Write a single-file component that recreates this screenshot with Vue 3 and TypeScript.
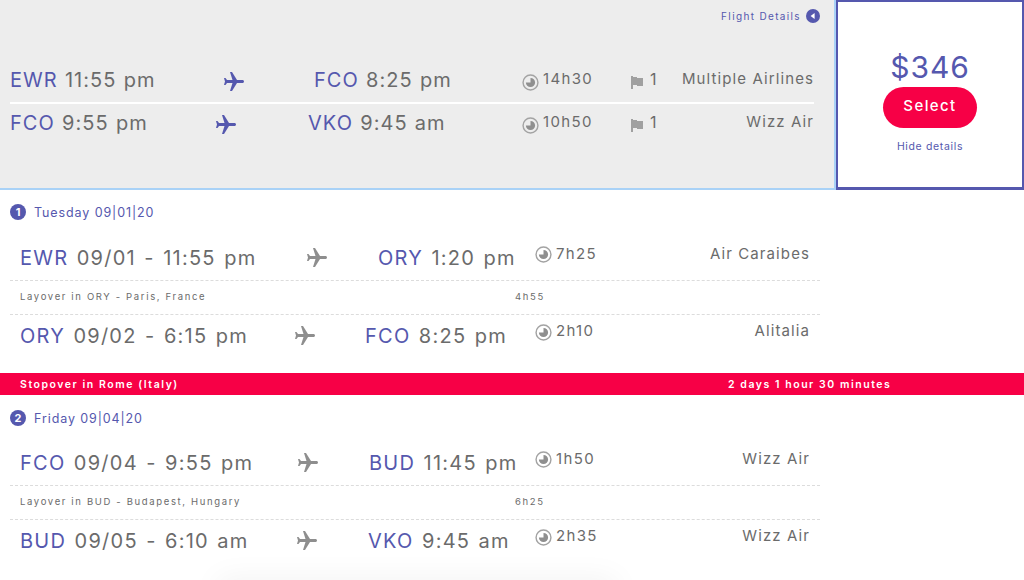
<script setup lang="ts">
interface Leg {
  from: string; dep: string; to: string; arr: string; dur: string; airline: string
  cols: [number, number, number]
}
interface Section {
  n: number; date: string; first: Leg; layover: string; wait: string; second: Leg
}
const summary = [
  { from: 'EWR', dep: '11:55 pm', to: 'FCO', arr: '8:25 pm', dur: '14h30', airline: 'Multiple Airlines', cols: [214, 90, 208] },
  { from: 'FCO', dep: '9:55 pm', to: 'VKO', arr: '9:45 am', dur: '10h50', airline: 'Wizz Air', cols: [206, 92, 214] }
]
const sections: Section[] = [
  {
    n: 1, date: 'Tuesday 09|01|20',
    first: { from: 'EWR', dep: '09/01 - 11:55 pm', to: 'ORY', arr: '1:20 pm', dur: '7h25', airline: 'Air Caraibes', cols: [287, 71, 157] },
    layover: 'Layover in ORY - Paris, France', wait: '4h55',
    second: { from: 'ORY', dep: '09/02 - 6:15 pm', to: 'FCO', arr: '8:25 pm', dur: '2h10', airline: 'Alitalia', cols: [275, 70, 170] }
  },
  {
    n: 2, date: 'Friday 09|04|20',
    first: { from: 'FCO', dep: '09/04 - 9:55 pm', to: 'BUD', arr: '11:45 pm', dur: '1h50', airline: 'Wizz Air', cols: [278, 71, 166] },
    layover: 'Layover in BUD - Budapest, Hungary', wait: '6h25',
    second: { from: 'BUD', dep: '09/05 - 6:10 am', to: 'VKO', arr: '9:45 am', dur: '2h35', airline: 'Wizz Air', cols: [277, 71, 167] }
  }
]
const columns = (c: number[]) => ({ gridTemplateColumns: `${c[0]}px ${c[1]}px ${c[2]}px auto 1fr` })
const plane = 'M21 16v-2l-8-5V3.5c0-.83-.67-1.5-1.5-1.5S10 2.67 10 3.5V9l-8 5v2l8-2.5V19l-2 1.5V22l3.5-1 3.5 1v-1.5L13 19v-5.5l8 2.5z'
const pie = 'M12 5.5a6.5 6.5 0 1 1-6.5 6.5h6.5z'
</script>

<template>
  <div class="page">
    <header class="top">
      <section class="summary">
        <div class="details-link">
          <span>Flight Details</span>
          <svg class="back" viewBox="0 0 14 14"><circle cx="7" cy="7" r="7" /><path d="M8.6 4v6L4.6 7z" /></svg>
        </div>
        <div class="sum-rows">
          <div v-for="(r, i) in summary" :key="i" class="sum-row" :style="columns(r.cols)">
            <div class="place"><b>{{ r.from }}</b> {{ r.dep }}</div>
            <svg class="plane blue" viewBox="0 0 24 24"><path :d="plane" transform="rotate(90 12 12)" /></svg>
            <div class="place"><b>{{ r.to }}</b> {{ r.arr }}</div>
            <div class="stats">
              <div class="dur">
                <svg class="clock" viewBox="0 0 24 24"><circle cx="12" cy="12" r="10.5" /><path :d="pie" /></svg>
                <span>{{ r.dur }}</span>
              </div>
              <div class="stops">
                <svg class="flag" viewBox="0 0 14 14"><path d="M1 1h2v1h4v1h6v8H7v-1H3v4H1z" /></svg>
                <span>1</span>
              </div>
            </div>
            <div class="airline">{{ r.airline }}</div>
          </div>
        </div>
      </section>
      <aside class="price">
        <div class="amount">$346</div>
        <button class="select" type="button">Select</button>
        <a class="hide">Hide details</a>
      </aside>
    </header>

    <template v-for="(s, si) in sections" :key="s.n">
      <section class="trip" :class="{ last: si === 1 }">
        <h3 class="day"><span class="badge">{{ s.n }}</span>{{ s.date }}</h3>
        <div class="legs">
          <div class="leg" :style="columns(s.first.cols)">
            <div class="place wide"><b>{{ s.first.from }}</b> {{ s.first.dep }}</div>
            <svg class="plane grey" viewBox="0 0 24 24"><path :d="plane" transform="rotate(90 12 12)" /></svg>
            <div class="place wide"><b>{{ s.first.to }}</b> {{ s.first.arr }}</div>
            <div class="dur lifted">
              <svg class="clock" viewBox="0 0 24 24"><circle cx="12" cy="12" r="10.5" /><path :d="pie" /></svg>
              <span>{{ s.first.dur }}</span>
            </div>
            <div class="airline lifted">{{ s.first.airline }}</div>
          </div>
          <div class="layover">
            <span class="lay-text">{{ s.layover }}</span>
            <span>{{ s.wait }}</span>
          </div>
          <div class="leg" :style="columns(s.second.cols)">
            <div class="place wide"><b>{{ s.second.from }}</b> {{ s.second.dep }}</div>
            <svg class="plane grey" viewBox="0 0 24 24"><path :d="plane" transform="rotate(90 12 12)" /></svg>
            <div class="place wide"><b>{{ s.second.to }}</b> {{ s.second.arr }}</div>
            <div class="dur lifted">
              <svg class="clock" viewBox="0 0 24 24"><circle cx="12" cy="12" r="10.5" /><path :d="pie" /></svg>
              <span>{{ s.second.dur }}</span>
            </div>
            <div class="airline lifted">{{ s.second.airline }}</div>
          </div>
        </div>
      </section>
      <div v-if="si === 0" class="stopover">
        <span>Stopover in Rome (Italy)</span>
        <span class="stop-time">2 days 1 hour 30 minutes</span>
      </div>
    </template>
    <div class="under-shadow"></div>
  </div>
</template>

<style>
html, body { margin: 0; background: #fff; overflow: hidden; }
</style>

<style scoped>
.page {
  position: relative;
  width: 1024px;
  height: 580px;
  overflow: hidden;
  background: #fff;
  font-family: Inter, "Noto Sans", sans-serif;
  color: #6b6b6b;
}
.top { display: flex; height: 190px; box-sizing: border-box; }
.summary {
  width: 836px;
  box-sizing: border-box;
  background: #ededed;
  border-right: 2px solid #a9d2f7;
  border-bottom: 2px solid #a9d2f7;
  padding: 0 20px 0 10px;
  display: flex;
  flex-direction: column;
}
.details-link {
  height: 32px;
  margin-right: -6px;
  display: flex;
  justify-content: flex-end;
  align-items: center;
  gap: 5px;
  font-size: 10px;
  letter-spacing: 1.35px;
  color: #5558ae;
}
.back { width: 14px; height: 14px; }
.back circle { fill: #5558ae; }
.back path { fill: #fff; }
.sum-rows { margin-top: 26px; width: 804px; }
.sum-row {
  display: grid;
  align-items: center;
  height: 38px;
  box-sizing: border-box;
}
.sum-row:first-child {
  height: 46px;
  border-bottom: 2px solid #fff;
}
.place {
  font-size: 20px;
  letter-spacing: 1.05px;
  word-spacing: 0.5px;
  white-space: nowrap;
  color: #6b6b6b;
}
.place.wide {
  letter-spacing: 1.25px;
  word-spacing: 1.5px;
}
.place b { font-weight: 400; color: #5558ae; }
.plane { width: 24px; height: 24px; margin-left: -2px; }
.sum-row .plane { margin-top: 4px; }
.plane.blue { fill: #5558ae; }
.plane.grey { fill: #8e8e8e; }
.stats { display: flex; width: 148px; }
.dur {
  display: flex;
  align-items: center;
  gap: 4px;
  font-size: 15px;
  letter-spacing: 1.35px;
}
.stats .dur { width: 108px; }
.dur span, .sum-row .airline { position: relative; top: -2px; }
.lifted span { top: 0; }
.stops span { position: relative; top: -1px; }
.clock { width: 17px; height: 17px; margin-top: 4px; }
.lifted .clock { margin-top: 3px; }
.clock circle { fill: none; stroke: #a3a3a3; stroke-width: 2; }
.clock path { fill: #8f8f8f; }
.stops {
  display: flex;
  align-items: center;
  gap: 6px;
  font-size: 16px;
}
.flag { width: 14px; height: 14px; fill: #a0a0a0; margin-top: 4px; }
.airline {
  text-align: right;
  font-size: 15px;
  letter-spacing: 1.1px;
  white-space: nowrap;
}
.lifted { position: relative; top: -5px; }
.price {
  width: 188px;
  box-sizing: border-box;
  border: 2px solid #5558ae;
  border-bottom-width: 3px;
  display: flex;
  flex-direction: column;
  align-items: center;
  padding-top: 47px;
}
.amount {
  font-size: 30px;
  line-height: 36px;
  letter-spacing: 0.9px;
  color: #5558ae;
}
.select {
  width: 94px;
  height: 41px;
  margin-top: 2px;
  padding: 0 0 4px;
  border: 0;
  border-radius: 21px;
  background: #f70046;
  color: #fff;
  font: inherit;
  font-size: 15px;
  font-weight: 500;
  letter-spacing: 1.4px;
}
.hide {
  margin-top: 12px;
  font-size: 10.5px;
  letter-spacing: 0.65px;
  color: #5558ae;
}
.trip { height: 183px; box-sizing: border-box; padding-top: 13px; }
.trip.last { height: 185px; padding-top: 14px; }
.day {
  margin: 0;
  height: 18px;
  padding-left: 10px;
  display: flex;
  align-items: center;
  gap: 8px;
  font-size: 12.5px;
  font-weight: 400;
  letter-spacing: 0.9px;
  color: #5558ae;
}
.badge {
  width: 16px;
  height: 16px;
  border-radius: 50%;
  background: #5558ae;
  color: #fff;
  display: flex;
  align-items: center;
  justify-content: center;
  font-size: 11px;
  font-weight: 700;
  letter-spacing: 0;
}
.legs { margin-top: 16px; width: 810px; margin-left: 10px; }
.trip.last .legs { margin-top: 15px; }
.leg {
  display: grid;
  align-items: center;
  height: 47px;
  padding: 0 10px;
  box-sizing: border-box;
}
.leg:first-child { height: 43px; padding-bottom: 1px; }
.leg:last-child { height: 41px; }
.layover {
  height: 35px;
  box-sizing: border-box;
  border-top: 1px dashed #dcdcdc;
  border-bottom: 1px dashed #dcdcdc;
  padding: 0 0 3px 10px;
  display: flex;
  align-items: center;
  font-size: 9.5px;
  letter-spacing: 1.65px;
  color: #6b6b6b;
}
.lay-text { width: 495px; }
.stopover {
  height: 22px;
  background: #f70046;
  color: #fff;
  display: flex;
  align-items: center;
  padding-left: 20px;
  font-size: 10.5px;
  font-weight: 600;
  letter-spacing: 1.55px;
}
.stopover span:first-child { width: 708px; }
.under-shadow {
  position: absolute;
  left: 230px;
  right: 420px;
  top: 590px;
  height: 10px;
  box-shadow: 0 0 30px 12px rgba(0, 0, 0, 0.05);
}
</style>
